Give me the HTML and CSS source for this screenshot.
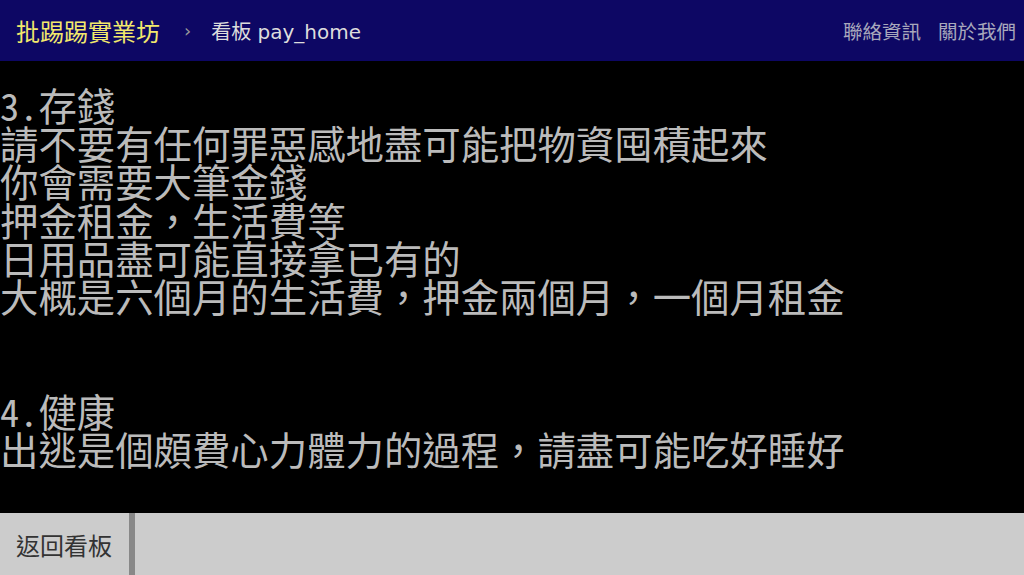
FILE: index.html
```html
<!DOCTYPE html>
<html lang="zh-TW">
<head>
    <meta charset="UTF-8">
    <meta name="viewport" content="width=device-width, initial-scale=1.0">
    <title>pay_home - 批踢踢實業坊</title>
    <link rel="stylesheet" href="styles.css">
</head>
<body>
    <div class="topbar">
        <a class="logo" href="#">批踢踢實業坊</a>
        <span class="sep">›</span>
        <a class="board" href="#">看板 pay_home</a>
        <div class="right">
            <a href="#">聯絡資訊</a>
            <a href="#">關於我們</a>
        </div>
    </div>

    <div class="main-content">
        <div class="line">3.存錢</div>
        <div class="line">請不要有任何罪惡感地盡可能把物資囤積起來</div>
        <div class="line">你會需要大筆金錢</div>
        <div class="line">押金租金，生活費等</div>
        <div class="line">日用品盡可能直接拿已有的</div>
        <div class="line">大概是六個月的生活費，押金兩個月，一個月租金</div>
        <div class="line">&nbsp;</div>
        <div class="line">&nbsp;</div>
        <div class="line">4.健康</div>
        <div class="line">出逃是個頗費心力體力的過程，請盡可能吃好睡好</div>
    </div>

    <div class="action-bar">
        <a class="btn" href="#">返回看板</a>
        <div class="filler"></div>
    </div>
</body>
</html>
```

FILE: styles.css
```css
body {
    background-color: #000;
    color: #bbb;
    font-family: "DejaVu Sans", "Noto Sans CJK TC", sans-serif;
    margin: 0;
    padding: 0;
    height: 575px;
    overflow: hidden;
    display: flex;
    flex-direction: column;
}
a {
    text-decoration: none;
}

.topbar {
    background-color: #0d0764;
    height: 61px;
    display: flex;
    align-items: center;
    padding: 0 8px 0 16px;
    flex-shrink: 0;
}
.logo {
    color: #f3e96c;
    font-size: 24px;
}
.sep {
    color: #999;
    font-size: 18px;
    margin: 0 20px 0 24px;
}
.board {
    color: #ddd;
    font-size: 20px;
}
.right {
    margin-left: auto;
    display: flex;
    gap: 17px;
}
.right a {
    color: #a8a8bc;
    font-size: 19.5px;
}

.main-content {
    flex: 1;
    min-height: 0;
    overflow: hidden;
    padding-top: 24px;
    font-family: "Noto Sans Mono CJK TC", "Noto Sans CJK TC", "DejaVu Sans Mono", monospace;
    font-weight: 300;
    font-size: 38.4px;
    line-height: 38.2px;
}
.line {
    white-space: pre;
}

.action-bar {
    height: 62px;
    background-color: #ccc;
    display: flex;
    flex-shrink: 0;
}
.btn {
    width: 113px;
    padding-left: 16px;
    border-right: 6px solid #888;
    color: #333;
    font-size: 24px;
    display: flex;
    align-items: center;
}
.filler {
    flex: 1;
}
```
